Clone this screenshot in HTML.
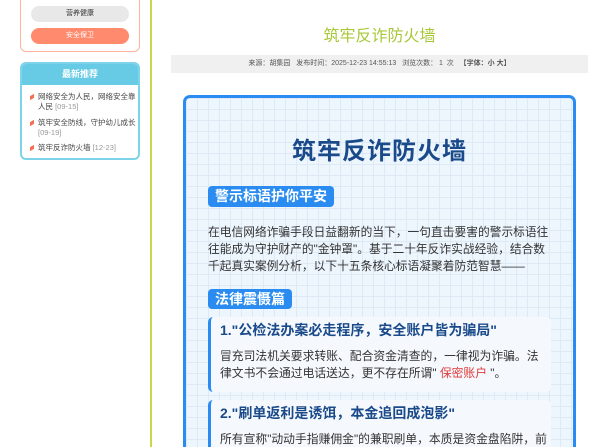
<!DOCTYPE html>
<html><head><meta charset="utf-8"><style>
*{margin:0;padding:0;box-sizing:border-box}
html,body{width:600px;height:447px;overflow:hidden}
body{background:#fff;font-family:"Liberation Sans","Noto Sans CJK SC",sans-serif}
#w{position:relative;width:600px;height:447px;overflow:hidden}
.a{position:absolute}
.box1{left:20px;top:-10px;width:120px;height:62px;border:1px solid #ffb49c;border-radius:6px}
.pill{left:31px;width:98px;height:16px;border-radius:8px;font-size:7px;text-align:center;line-height:16px}
.box2{left:20px;top:62px;width:120px;height:98px;border:2px solid #7dd3ea;border-radius:6px;overflow:hidden}
.box2 .h{background:#68cbe6;height:21px;color:#fff;font-weight:bold;font-size:9px;text-align:center;line-height:21px}
.li{position:absolute;left:8px;font-size:7.5px;color:#444;line-height:10px;width:108px;padding-left:8px}
.li:before{content:"";position:absolute;left:0;top:3px;width:4px;height:4px;background:#f07050;transform:skewY(-30deg)}
.li span{color:#999}
.vl{left:150px;top:0;width:1.5px;height:447px;background:#c8d84a}
.poster{left:183px;top:95px;width:393px;height:352px;border:3px solid #2a8cf0;border-bottom:none;border-radius:7px 7px 0 0;background-color:#eef6fd;background-image:linear-gradient(#dde9f5 1px,transparent 1px),linear-gradient(90deg,#dde9f5 1px,transparent 1px);background-size:11px 11px}
.tag{background:#2a8cf0;color:#fff;font-weight:bold;font-size:14px;border-radius:4px;padding:0 7px;line-height:21px;height:21px}
.p{left:208px;font-size:11.7px;letter-spacing:0.05px;line-height:17px;color:#333;white-space:nowrap}
.card{left:208px;width:343px;background:#f5f9fd;border-left:3px solid #2a8cf0;border-radius:5px;padding:3px 0 0 9px;overflow:hidden}
.card h3{font-size:14px;color:#1a4a8a;line-height:20px;white-space:nowrap}
.card p{font-size:11.8px;line-height:17px;color:#333;margin-top:8px;white-space:nowrap}
</style></head><body><div id="w">
<div class="a box1"></div>
<div class="a pill" style="top:6px;background:#e8e8e8;color:#333">营养健康</div>
<div class="a pill" style="top:28px;background:#ff8a6e;color:#fff">安全保卫</div>
<div class="a box2"><div class="h">最新推荐</div>
<div class="li" style="top:28px">网络安全为人民，网络安全靠人民 <span>[09-15]</span></div>
<div class="li" style="top:54px">筑牢安全防线，守护幼儿成长 <span>[09-19]</span></div>
<div class="li" style="top:79px">筑牢反诈防火墙 <span>[12-23]</span></div>
</div>
<div class="a vl"></div>
<div class="a" style="left:171px;width:417px;top:22px;text-align:center;font-size:16px;color:#a8c83a">筑牢反诈防火墙</div>
<div class="a" style="left:171px;width:417px;top:55px;height:18px;background:#f0f0f0;font-size:7px;color:#555;text-align:center;line-height:18px">来源：胡集园&nbsp;&nbsp;&nbsp;发布时间：2025-12-23 14:55:13&nbsp;&nbsp;&nbsp;浏览次数：&nbsp;1&nbsp;&nbsp;次&nbsp;&nbsp;&nbsp;<b>【字体：小 大】</b></div>
<div class="a poster"></div>
<div class="a" style="left:183px;width:393px;top:131px;text-align:center;font-size:24px;font-weight:bold;color:#1a4a8a;letter-spacing:1px">筑牢反诈防火墙</div>
<div class="a tag" style="left:208px;top:186px">警示标语护你平安</div>
<div class="a p" style="top:224px">在电信网络诈骗手段日益翻新的当下，一句直击要害的警示标语往<br>往能成为守护财产的"金钟罩"。基于二十年反诈实战经验，结合数<br>千起真实案例分析，以下十五条核心标语凝聚着防范智慧——</div>
<div class="a tag" style="left:208px;top:289px;height:20px;line-height:20px">法律震慑篇</div>
<div class="a card" style="top:317px;height:75px"><h3>1."公检法办案必走程序，安全账户皆为骗局"</h3><p>冒充司法机关要求转账、配合资金清查的，一律视为诈骗。法<br>律文书不会通过电话送达，更不存在所谓" <span style="color:#e03a3a">保密账户</span> "。</p></div>
<div class="a card" style="top:400px;height:47px;border-radius:5px 5px 0 0"><h3>2."刷单返利是诱饵，本金追回成泡影"</h3><p>所有宣称"动动手指赚佣金"的兼职刷单，本质是资金盘陷阱，前</p></div>
</div></body></html>
